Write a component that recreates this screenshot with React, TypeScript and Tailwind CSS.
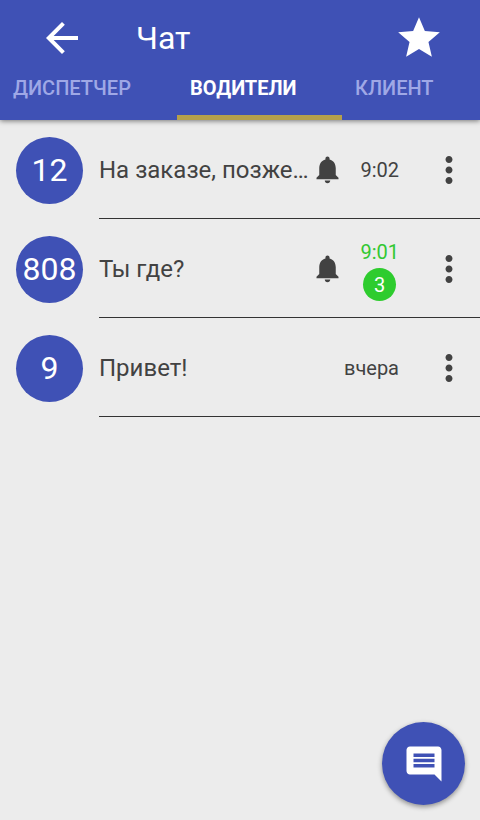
const tabs = [
  { id: 'dispatcher', label: 'ДИСПЕТЧЕР' },
  { id: 'drivers', label: 'ВОДИТЕЛИ' },
  { id: 'client', label: 'КЛИЕНТ' },
];

const activeTab = 'drivers';

const chats = [
  { id: '12', text: 'На заказе, позже…', time: '9:02', bell: true, unread: 0 },
  { id: '808', text: 'Ты где?', time: '9:01', bell: true, unread: 3 },
  { id: '9', text: 'Привет!', time: 'вчера', bell: false, unread: 0 },
];

function Icon({ d, className }: { d: string; className: string }) {
  return (
    <svg className={className} viewBox="0 0 24 24" fill="currentColor" aria-hidden="true">
      <path d={d} />
    </svg>
  );
}

const icons = {
  back: 'M20 11H7.83l5.59-5.59L12 4l-8 8 8 8 1.41-1.41L7.83 13H20v-2z',
  star: 'M12 17.27L18.18 21l-1.64-7.03L22 9.24l-7.19-.61L12 2 9.19 8.63 2 9.24l5.46 4.73L5.82 21z',
  bell: 'M12 22c1.1 0 2-.9 2-2h-4c0 1.1.89 2 2 2zm6-6v-5c0-3.07-1.64-5.64-4.5-6.32V4c0-.83-.67-1.5-1.5-1.5s-1.5.67-1.5 1.5v.68C7.63 5.36 6 7.92 6 11v5l-2 2v1h16v-1l-2-2z',
  more: 'M12 8c1.1 0 2-.9 2-2s-.9-2-2-2-2 .9-2 2 .9 2 2 2zm0 2c-1.1 0-2 .9-2 2s.9 2 2 2 2-.9 2-2-.9-2-2-2zm0 6c-1.1 0-2 .9-2 2s.9 2 2 2 2-.9 2-2-.9-2-2-2z',
  comment:
    'M21.99 4c0-1.1-.89-2-1.99-2H4c-1.1 0-2 .9-2 2v12c0 1.1.9 2 2 2h14l4 4-.01-18zM18 14H6v-2h12v2zm0-3H6V9h12v2zm0-3H6V6h12v2z',
};

export default function App() {
  return (
    <div className="min-h-screen bg-[#ececec] font-[Roboto,sans-serif] text-[#424242]">
      <header className="bg-[#3f51b5] text-white shadow-[0_1px_5px_rgba(0,0,0,0.5)]">
        <div className="flex items-center pt-[13px] pl-[38px] pr-9">
          <button type="button" aria-label="Назад">
            <Icon d={icons.back} className="size-12" />
          </button>
          <h1 className="ml-[50px] flex-1 text-[32px] leading-12">Чат</h1>
          <button type="button" aria-label="Избранное">
            <Icon d={icons.star} className="size-[50px]" />
          </button>
        </div>

        <nav className="grid grid-cols-[177fr_165fr_138fr]">
          {tabs.map((tab) => (
            <button
              key={tab.id}
              type="button"
              className={
                tab.id === activeTab
                  ? 'h-[57px] border-b-[5px] border-[#b5a04c] px-[13px] pb-0.5 text-left text-xl font-bold'
                  : 'h-[57px] border-b-[5px] border-transparent px-[13px] pb-0.5 text-left text-xl font-medium text-[#9fa8e6]'
              }
            >
              {tab.label}
            </button>
          ))}
        </nav>
      </header>

      <ul>
        {chats.map((chat) => (
          <li key={chat.id} className="flex h-[99px] pl-4 pt-px">
            <div className="mr-4 flex size-[67px] shrink-0 items-center justify-center self-center rounded-full bg-[#3f51b5] text-[32px] text-white">
              {chat.id}
            </div>
            <div className="flex min-w-0 flex-1 items-center border-b border-[#333] pr-2.5">
              <p className="min-w-0 flex-1 truncate text-2xl">{chat.text}</p>
              {chat.bell && <Icon d={icons.bell} className="mr-4 size-[33px] shrink-0" />}
              <div className="mr-[29px] flex flex-col items-center gap-1">
                <time className={chat.unread ? 'pt-1 text-xl leading-6 text-[#32c832]' : 'text-xl leading-6'}>
                  {chat.time}
                </time>
                {chat.unread > 0 && (
                  <span className="flex size-[33px] items-center justify-center rounded-full bg-[#2ecc2e] text-xl text-white">
                    {chat.unread}
                  </span>
                )}
              </div>
              <button type="button" aria-label="Меню">
                <Icon d={icons.more} className="size-[42px]" />
              </button>
            </div>
          </li>
        ))}
      </ul>

      <button
        type="button"
        aria-label="Новое сообщение"
        className="fixed right-[15px] bottom-[15px] flex size-[83px] items-center justify-center rounded-full bg-[#3f51b5] text-white shadow-[0_2px_5px_rgba(0,0,0,0.4)]"
      >
        <Icon d={icons.comment} className="size-[42px]" />
      </button>
    </div>
  );
}
